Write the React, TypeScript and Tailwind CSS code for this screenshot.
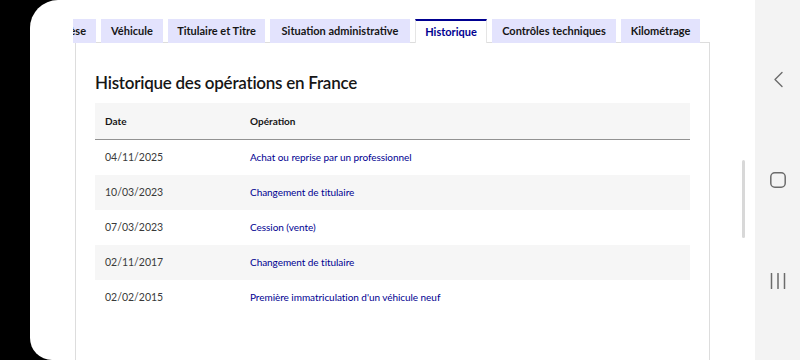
import { Fragment } from 'react';

const font = { fontFamily: '"Lato", "Noto Sans", sans-serif' };

type Tab = { label: string; width: string; active?: boolean };

const tabs: Tab[] = [
  { label: 'Véhicule', width: 'w-[62px]' },
  { label: 'Titulaire et Titre', width: 'w-[97px]' },
  { label: 'Situation administrative', width: 'w-[140px]' },
  { label: 'Historique', width: 'w-[72px]', active: true },
  { label: 'Contrôles techniques', width: 'w-[124px]' },
  { label: 'Kilométrage', width: 'w-[79px]' },
];

const rows = [
  { date: '04/11/2025', op: 'Achat ou reprise par un professionnel' },
  { date: '10/03/2023', op: 'Changement de titulaire' },
  { date: '07/03/2023', op: 'Cession (vente)' },
  { date: '02/11/2017', op: 'Changement de titulaire' },
  { date: '02/02/2015', op: "Première immatriculation d'un véhicule neuf" },
];

const TabBar = () => {
  return (
    <div className="flex h-[43px] items-end gap-[5px] overflow-hidden pt-[18px]">
      <div className="flex h-[24px] w-[23px] shrink-0 items-center justify-end overflow-hidden bg-[#e3e3fd] pr-[10px] text-[11px] font-bold whitespace-nowrap text-[#161616]">
        Synthèse
      </div>
      {tabs.map((tab) => {
        if (tab.active) {
          return (
            <div
              key={tab.label}
              className={`${tab.width} relative z-10 flex h-[25px] shrink-0 translate-y-[1px] items-center justify-center border-x border-t-2 border-x-[#e5e5e5] border-t-[#000091] bg-white pb-[1px] text-[11px] font-bold whitespace-nowrap text-[#000091]`}
            >
              {tab.label}
            </div>
          );
        }
        return (
          <div
            key={tab.label}
            className={`${tab.width} flex h-[24px] shrink-0 items-center justify-center bg-[#e3e3fd] text-[11px] font-bold whitespace-nowrap text-[#161616]`}
          >
            {tab.label}
          </div>
        );
      })}
    </div>
  );
};

const HistoryTable = () => {
  return (
    <div className="w-[595px]">
      <div className="flex h-[37px] items-center border-b border-[#929292] bg-[#f6f6f6] text-[10px] font-bold text-[#161616]">
        <div className="w-[155px] pl-[10px]">Date</div>
        <div>Opération</div>
      </div>
      {rows.map((row, i) => (
        <div
          key={row.date + i}
          className={`flex h-[35px] items-center ${i % 2 === 1 ? 'bg-[#f6f6f6]' : 'bg-white'}`}
        >
          <div className="w-[155px] pl-[10px] text-[10.5px] text-[#3a3a3a]">{row.date}</div>
          <div className="text-[10px] tracking-[-0.05px] text-[#000091]">{row.op}</div>
        </div>
      ))}
    </div>
  );
};

const NavBar = () => {
  return (
    <div className="flex w-[45px] shrink-0 flex-col items-center bg-[#f3f3f3] pt-[71px] pl-[1px]">
      <svg width="11" height="17" viewBox="0 0 11 17" fill="none">
        <path d="M9 1.5 L2 8.5 L9 15.5" stroke="#6b6b6b" strokeWidth="1.4" strokeLinecap="round" strokeLinejoin="round" />
      </svg>
      <svg className="mt-[84px]" width="16" height="16" viewBox="0 0 16 16" fill="none">
        <rect x="0.8" y="0.8" width="14.4" height="14.4" rx="4" stroke="#6b6b6b" strokeWidth="1.5" />
      </svg>
      <svg className="mt-[85px]" width="16" height="16" viewBox="0 0 16 16" fill="none">
        <path d="M1.5 0.5 V15.5 M8 0.5 V15.5 M14.5 0.5 V15.5" stroke="#6b6b6b" strokeWidth="1.5" strokeLinecap="round" />
      </svg>
    </div>
  );
};

export default function App() {
  return (
    <div className="flex h-[360px] w-[800px] overflow-hidden bg-black" style={font}>
      <div className="w-[30px] shrink-0" />
      <div className="relative flex-1 overflow-hidden rounded-tl-[28px] rounded-bl-[22px] bg-white">
        <div className="ml-[43px] w-[637px]">
          <TabBar />
          <div className="-mt-[1px] ml-[2px] h-[330px] w-[635px] border border-[#dddddd] px-[19px] pt-[28px]">
            <h2 className="mb-[8px] h-[24px] text-[17px] leading-[24px] font-semibold tracking-[-0.25px] text-[#161616]">
              Historique des opérations en France
            </h2>
            <HistoryTable />
          </div>
        </div>
        <div className="absolute top-[160px] left-[712px] h-[78px] w-[3px] rounded-full bg-[#d8d8d8]" />
      </div>
      <NavBar />
    </div>
  );
}
